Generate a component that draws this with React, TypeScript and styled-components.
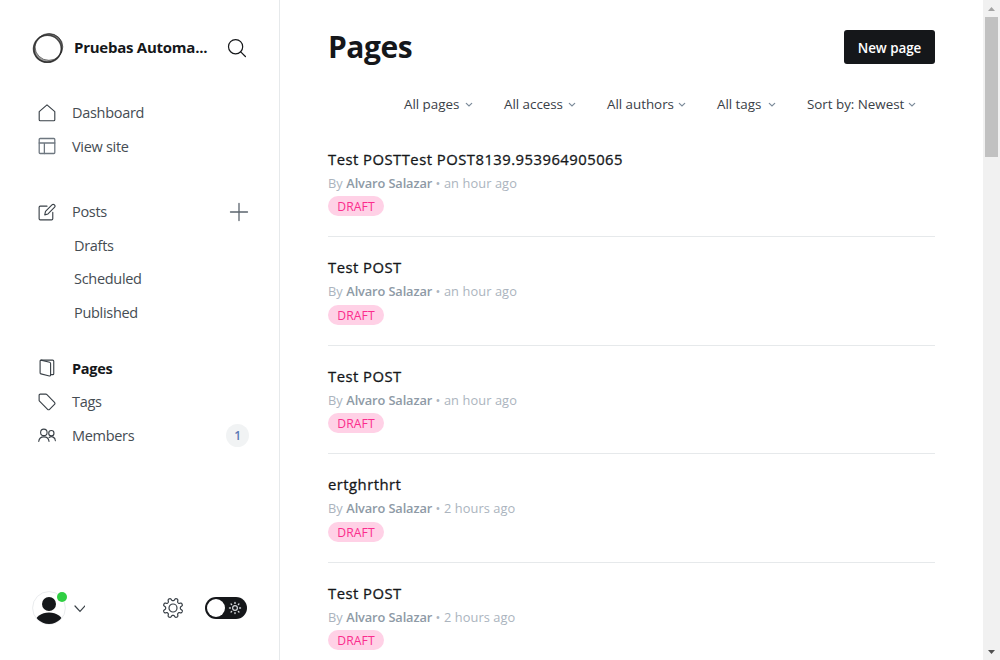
import React from "react";
import styled, { createGlobalStyle } from "styled-components";

const Global = createGlobalStyle`
  * { box-sizing: border-box; }
  html, body { margin: 0; padding: 0; overflow: hidden; background: #fff; }
  body { font-family: "Open Sans", "Noto Sans", sans-serif; color: #15171a; }
  svg { display: block; flex: none; }
`;

const Shell = styled.div`
  display: flex;
  width: 1000px;
  height: 660px;
  overflow: hidden;
`;

const Sidebar = styled.nav`
  display: flex;
  flex-direction: column;
  width: 280px;
  flex: none;
  border-right: 1px solid #e6e9eb;
`;

const SiteHeader = styled.header`
  display: flex;
  align-items: center;
  height: 96px;
  padding: 0 32px;
`;

const SiteName = styled.div`
  width: 140px;
  margin: 0 12px 2px 10px;
  font-size: 15px;
  font-weight: 700;
  line-height: 20px;
  letter-spacing: -0.25px;
  white-space: nowrap;
`;

const NavGroup = styled.div<{ $gap: number }>`
  display: flex;
  flex-direction: column;
  margin-bottom: ${(p) => p.$gap}px;
`;

const NavItem = styled.div<{ $active?: boolean; $sub?: boolean }>`
  display: flex;
  align-items: center;
  height: 33.5px;
  padding: 0.5px 30px 0 ${(p) => (p.$sub ? 74 : 38)}px;
  font-size: 14.5px;
  line-height: 20px;
  font-weight: ${(p) => (p.$active ? 700 : 400)};
  color: ${(p) => (p.$active ? "#15171a" : "#454c53")};
  letter-spacing: -0.3px;

  > svg {
    margin-top: -1px;
  }
`;

const NavLabel = styled.span`
  flex: 1;
  margin-left: 16px;
`;

const Count = styled.span`
  width: 23px;
  height: 23px;
  border-radius: 50%;
  background: #f1f3f4;
  color: #5a78b4;
  font-size: 12px;
  line-height: 24px;
  font-weight: 600;
  text-align: center;
`;

const SidebarFooter = styled.footer`
  display: flex;
  align-items: center;
  height: 34px;
  margin-top: auto;
  margin-bottom: 35px;
  padding: 0 32px;
`;

const Spacer = styled.div`
  flex: 1;
`;

const MenuArrow = styled.svg`
  margin-left: 3px;
`;

const Toggle = styled.div`
  display: flex;
  align-items: center;
  justify-content: space-between;
  width: 42px;
  height: 22px;
  margin-left: 21px;
  padding: 0 5px 0 2px;
  border-radius: 11px;
  background: #15171a;
`;

const Knob = styled.span`
  width: 18px;
  height: 18px;
  border-radius: 50%;
  background: #fff;
`;

const Main = styled.main`
  flex: 1;
  min-width: 0;
  padding: 0 48px;
`;

const TitleBar = styled.header`
  display: flex;
  align-items: center;
  justify-content: space-between;
  height: 94px;
`;

const Title = styled.h1`
  margin: 0;
  font-size: 30px;
  line-height: 38px;
  font-weight: 700;
  letter-spacing: -0.5px;
`;

const Button = styled.button`
  width: 91px;
  height: 34px;
  padding: 2px 0 0;
  border: 0;
  border-radius: 3px;
  background: #15171a;
  color: #fff;
  font: 600 13.4px/20px "Open Sans", sans-serif;
  letter-spacing: -0.05px;
  text-align: center;
`;

const Filters = styled.div`
  display: flex;
  justify-content: flex-end;
  height: 34.5px;
  padding-right: 19px;
`;

const Filter = styled.div<{ $width: number }>`
  display: flex;
  align-items: center;
  justify-content: space-between;
  width: ${(p) => p.$width}px;
  height: 20px;
  margin-left: 31px;
  font-size: 13.4px;
  line-height: 20px;
  color: #394047;
  letter-spacing: -0.03px;
  white-space: nowrap;
`;

const Row = styled.article`
  height: 108.5px;
  padding-top: 19px;
  border-bottom: 1px solid #e6e9eb;
`;

const RowTitle = styled.h3`
  margin: 0;
  font-size: 14.8px;
  line-height: 22px;
  font-weight: 400;
  letter-spacing: 0.49px;
  -webkit-text-stroke: 0.3px #15171a;
  white-space: nowrap;
`;

const Meta = styled.p`
  margin: 3px 0 3.5px;
  color: #abb4be;
  font-size: 12.8px;
  line-height: 20px;
  letter-spacing: 0.1px;
  white-space: nowrap;
`;

const Author = styled.span`
  font-weight: 600;
  color: #8e9aa6;
  letter-spacing: -0.12px;
`;

const Badge = styled.span`
  display: block;
  width: 56px;
  height: 20px;
  border-radius: 10px;
  background: #ffd1e6;
  color: #fb2d8d;
  font-size: 12.2px;
  line-height: 21px;
  letter-spacing: 0.1px;
  text-align: center;
`;

const Scrollbar = styled.div`
  display: flex;
  flex-direction: column;
  align-items: center;
  justify-content: space-between;
  width: 17px;
  height: 660px;
  background: #f1f1f1;
`;

const Track = styled.div`
  flex: 1;
  width: 13px;
`;

const Thumb = styled.div`
  height: 140px;
  background: #c1c1c1;
`;

const ScrollButton = styled.div`
  display: flex;
  align-items: center;
  justify-content: center;
  width: 17px;
  height: 17px;
`;

const Icon = ({ children, color = "#394047", w = 1.5 }: { children: React.ReactNode; color?: string; w?: number }) => (
  <svg width="18" height="18" viewBox="0 0 24 24" fill="none" stroke={color} strokeWidth={w} strokeLinecap="round" strokeLinejoin="round">
    {children}
  </svg>
);

const Chevron = () => (
  <svg width="8" height="6" viewBox="0 0 8 6" fill="none" stroke="#7c8b9a" strokeWidth="1.2" strokeLinecap="round">
    <path d="M1.3 2.3 4 5l2.700-2.700" />
  </svg>
);

const gearPath = () => {
  const pts: string[] = [];
  for (let i = 0; i <= 160; i++) {
    const a = (i / 160) * Math.PI * 2;
    const wave = Math.tanh(2 * Math.cos(8 * (a - Math.PI / 8)));
    const r = 8.6 + 1.3 * wave;
    pts.push(`${(11 + r * Math.cos(a)).toFixed(2)} ${(11 + r * Math.sin(a)).toFixed(2)}`);
  }
  return `M${pts.join("L")}Z`;
};

const Logo = () => (
  <svg width="32" height="32" viewBox="0 0 32 32" fill="none" stroke="#222">
    <path
      d="M1.500 16.800a13.900 13.500 0 1 0 27.800 0a13.900 13.500 0 1 0 -27.800 0ZM3 14.900a13.900 13.400 0 1 0 27.800 0a13.900 13.400 0 1 0 -27.800 0Z"
      fill="#999"
      fillRule="evenodd"
      stroke="none"
    />
    <ellipse cx="15.400" cy="16.800" rx="13.900" ry="13.500" strokeWidth="1.500" opacity=".8" />
    <ellipse cx="16.900" cy="14.900" rx="13.900" ry="13.400" strokeWidth="1" opacity=".6" />
    <ellipse cx="16" cy="16.200" rx="14.500" ry="13.200" strokeWidth="1.200" opacity=".55" transform="rotate(-50 16 16)" />
  </svg>
);

const posts = [
  { title: "Test POSTTest POST8139.953964905065", time: "an hour ago" },
  { title: "Test POST", time: "an hour ago" },
  { title: "Test POST", time: "an hour ago" },
  { title: "ertghrthrt", time: "2 hours ago" },
  { title: "Test POST", time: "2 hours ago" },
];

const filters = [
  { label: "All pages", width: 69 },
  { label: "All access", width: 72 },
  { label: "All authors", width: 79 },
  { label: "All tags", width: 59 },
  { label: "Sort by: Newest", width: 109 },
];

export default function App() {
  return (
    <Shell>
      <Global />
      <Sidebar>
        <SiteHeader>
          <Logo />
          <SiteName>Pruebas Automa...</SiteName>
          <svg width="20" height="20" viewBox="0 0 20 20" fill="none" stroke="#15171a" strokeWidth="1.200" strokeLinecap="round">
            <circle cx="9.600" cy="8.700" r="7.100" />
            <path d="m14.700 13.800 4.700 4.700" />
          </svg>
        </SiteHeader>

        <NavGroup $gap={32}>
          <NavItem>
            <Icon>
              <path d="M1.600 10.200 12 1.200l10.400 9V21a1.300 1.300 0 0 1-1.300 1.300H2.900A1.300 1.300 0 0 1 1.600 21Z" />
            </Icon>
            <NavLabel>Dashboard</NavLabel>
          </NavItem>
          <NavItem>
            <Icon color="#6e7780" w={1.7}>
              <rect x="1.600" y="2" width="20.800" height="20" rx="1.200" />
              <path d="M1.600 8h20.800M8.500 8v14" />
            </Icon>
            <NavLabel>View site</NavLabel>
          </NavItem>
        </NavGroup>

        <NavGroup $gap={22.5}>
          <NavItem>
            <Icon>
              <path d="M12 4.200H3A1.500 1.500 0 0 0 1.500 5.700V21A1.500 1.500 0 0 0 3 22.500h15.200a1.500 1.500 0 0 0 1.500-1.500v-8.500" />
              <path d="m10 11.300 8.600-8.700a2.300 2.300 0 0 1 3.300 3.300l-8.600 8.700-4.300 1.200Z" />
            </Icon>
            <NavLabel>Posts</NavLabel>
            <svg width="20" height="20" viewBox="0 0 20 20" stroke="#5b646d" strokeWidth="1.300" strokeLinecap="round">
              <path d="M10 1.500v17M1.500 10h17" />
            </svg>
          </NavItem>
          <NavItem $sub>Drafts</NavItem>
          <NavItem $sub>Scheduled</NavItem>
          <NavItem $sub>Published</NavItem>
        </NavGroup>

        <NavGroup $gap={0}>
          <NavItem $active>
            <Icon>
              <path d="M4 1.500h15.500a1.500 1.500 0 0 1 1.500 1.500v16.500a1.300 1.300 0 0 1-1.300 1.300H17" />
              <path d="M4 1.500 15.500 4.300a1.700 1.700 0 0 1 1.300 1.700v15.400a1.300 1.300 0 0 1-1.600 1.200L4 19.800a1.500 1.500 0 0 1-1.200-1.500V2.700A1.200 1.200 0 0 1 4 1.500Z" />
            </Icon>
            <NavLabel>Pages</NavLabel>
          </NavItem>
          <NavItem>
            <Icon>
              <path d="M3 1.500h7.500a2 2 0 0 1 1.400.6L22 12.600a1.800 1.800 0 0 1 0 2.500l-6.600 6.700a1.800 1.800 0 0 1-2.600 0L2 10.800a1.800 1.800 0 0 1-.5-1.300V3A1.500 1.500 0 0 1 3 1.500Z" />
            </Icon>
            <NavLabel>Tags</NavLabel>
          </NavItem>
          <NavItem>
            <Icon>
              <circle cx="7.800" cy="8.500" r="4.300" />
              <circle cx="17.800" cy="9.500" r="3.500" />
              <path d="M1 20.500a6.900 6.900 0 0 1 13.700 0M14.800 15.300a5.200 5.200 0 0 1 8.300 4.200" />
            </Icon>
            <NavLabel>Members</NavLabel>
            <Count>1</Count>
          </NavItem>
        </NavGroup>

        <SidebarFooter>
          <svg width="36" height="34" viewBox="0 0 36 34">
            <defs>
              <clipPath id="avatar">
                <circle cx="17" cy="17" r="16" />
              </clipPath>
            </defs>
            <circle cx="17" cy="17" r="16.400" fill="#fff" stroke="#e3e6e9" strokeWidth=".8" />
            <g clipPath="url(#avatar)" fill="#15171a">
              <circle cx="17" cy="13" r="7" />
              <ellipse cx="17" cy="32" rx="14" ry="10.500" />
            </g>
            <circle cx="30" cy="6" r="5" fill="#30cf43" />
          </svg>
          <MenuArrow width="14" height="10" viewBox="0 0 14 10" fill="none" stroke="#394047" strokeWidth="1.200" strokeLinecap="round">
            <path d="m4 3 5 5.300L14 3" />
          </MenuArrow>
          <Spacer />
          <svg width="22" height="22" viewBox="0 0 22 22" fill="none" stroke="#394047" strokeWidth="1.200" strokeLinejoin="round">
            <path d={gearPath()} />
            <circle cx="11" cy="11" r="4" />
          </svg>
          <Toggle>
            <Knob />
            <svg width="14" height="14" viewBox="0 0 14 14" fill="none" stroke="#d4d7da" strokeWidth="1.400" strokeLinecap="round">
              <circle cx="7" cy="7" r="2.400" strokeWidth="1.200" />
              <path d="M7 1.500v.9M7 11.600v.9M1.500 7h.9M11.600 7h.9M3.100 3.100l.5.500M10.400 10.400l.5.500M3.100 10.900l.5-.5M10.400 3.600l.5-.5" />
            </svg>
          </Toggle>
        </SidebarFooter>
      </Sidebar>

      <Main>
        <TitleBar>
          <Title>Pages</Title>
          <Button>New page</Button>
        </TitleBar>
        <Filters>
          {filters.map((f) => (
            <Filter key={f.label} $width={f.width}>
              {f.label}
              <Chevron />
            </Filter>
          ))}
        </Filters>
        {posts.map((p, i) => (
          <Row key={i}>
            <RowTitle>{p.title}</RowTitle>
            <Meta>
              By <Author>Alvaro Salazar</Author> • {p.time}
            </Meta>
            <Badge>DRAFT</Badge>
          </Row>
        ))}
      </Main>

      <Scrollbar>
        <ScrollButton>
          <svg width="7" height="4" viewBox="0 0 7 4" fill="#a3a3a3">
            <path d="M0 4 3.500 0 7 4Z" />
          </svg>
        </ScrollButton>
        <Track>
          <Thumb />
        </Track>
        <ScrollButton>
          <svg width="7" height="4" viewBox="0 0 7 4" fill="#505050">
            <path d="M0 0 3.500 4 7 0Z" />
          </svg>
        </ScrollButton>
      </Scrollbar>
    </Shell>
  );
}
